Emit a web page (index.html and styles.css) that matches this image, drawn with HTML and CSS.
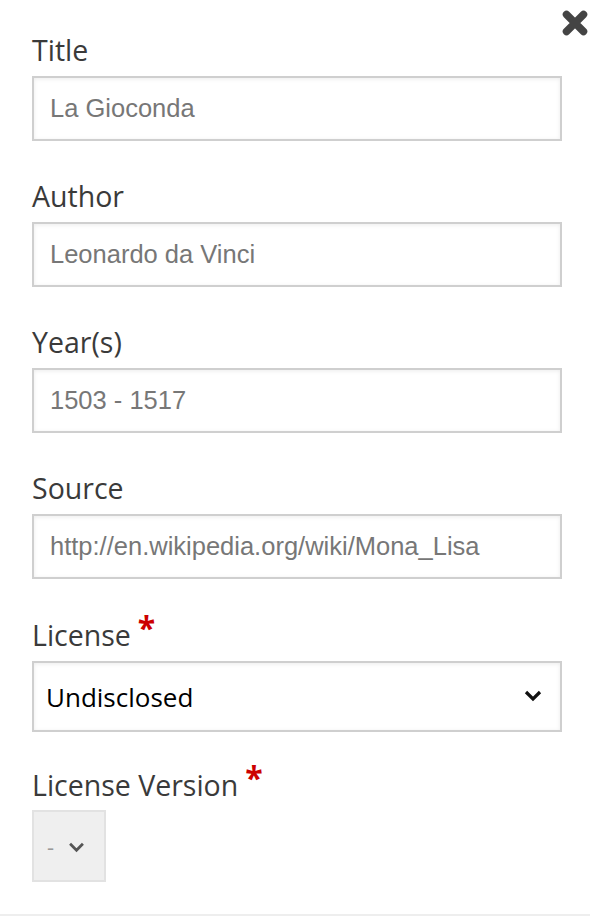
FILE: index.html
```html
<!DOCTYPE html>
<html lang="en">
<head>
<meta charset="utf-8">
<title>Artwork details</title>
<link rel="stylesheet" href="styles.css">
</head>
<body>
<div class="panel">
  <button class="close" type="button" aria-label="Close">
    <svg viewBox="0 0 26 26" width="26" height="26"><path d="M4.5 4.5 L21.5 21.5 M21.5 4.5 L4.5 21.5" stroke="#444" stroke-width="7.5" stroke-linecap="round"/></svg>
  </button>
  <form class="form">
    <div class="field">
      <label class="label" for="title">Title</label>
      <input class="input" id="title" type="text" placeholder="La Gioconda">
    </div>
    <div class="field">
      <label class="label" for="author">Author</label>
      <input class="input" id="author" type="text" placeholder="Leonardo da Vinci">
    </div>
    <div class="field">
      <label class="label" for="years">Year(s)</label>
      <input class="input" id="years" type="text" placeholder="1503 - 1517">
    </div>
    <div class="field">
      <label class="label" for="source">Source</label>
      <input class="input" id="source" type="text" placeholder="http://en.wikipedia.org/wiki/Mona_Lisa">
    </div>
    <div class="field">
      <label class="label" for="license">License<span class="req">*</span></label>
      <div class="select-wrap">
        <select class="select" id="license"><option>Undisclosed</option></select>
        <svg class="chev" viewBox="0 0 18 12" width="18" height="12"><path d="M2 2 L9 9 L16 2" fill="none" stroke="#111" stroke-width="3.2"/></svg>
      </div>
    </div>
    <div class="field last">
      <label class="label" for="version">License Version<span class="req">*</span></label>
      <div class="mini-wrap">
        <select class="mini" id="version" disabled><option>-</option></select>
        <svg class="mini-chev" viewBox="0 0 18 12" width="17" height="11"><path d="M2 2 L9 9 L16 2" fill="none" stroke="#555" stroke-width="3"/></svg>
      </div>
    </div>
  </form>
</div>
<div class="footer-line"></div>
</body>
</html>
```
FILE: styles.css
```css
html, body {
  margin: 0;
  padding: 0;
  background: #fff;
}
body {
  width: 590px;
  height: 916px;
  overflow: hidden;
  display: flex;
  flex-direction: column;
}
.panel {
  position: relative;
  flex: 1;
  padding: 32px 28px 0 32px;
}
.close {
  position: absolute;
  top: 9px;
  right: 1px;
  width: 28px;
  height: 28px;
  padding: 0;
  border: 0;
  background: none;
  display: flex;
  align-items: center;
  justify-content: center;
}
.form {
  display: flex;
  flex-direction: column;
  gap: 37px;
}
.field {
  display: flex;
  flex-direction: column;
  align-items: flex-start;
}
.field.last {
  margin-top: -3px;
}
.field.last .label {
  margin-bottom: 7px;
}
.label {
  font-family: "Open Sans", sans-serif;
  font-size: 28.5px;
  line-height: 36px;
  color: #3a3a3a;
  margin-bottom: 8px;
}
.req {
  color: #cc0000;
  font-size: 32px;
  font-weight: 700;
  position: relative;
  top: -6px;
  margin-left: 7px;
}
.input {
  box-sizing: border-box;
  width: 530px;
  height: 65px;
  border: 2px solid #cfcfcf;
  box-shadow: inset 0 1px 4px rgba(0,0,0,0.08);
  padding: 0 16px;
  font-family: "Liberation Sans", Arial, sans-serif;
  font-size: 25.5px;
  color: #777;
  outline: none;
}
.input::placeholder {
  color: #777;
  opacity: 1;
}
.select-wrap {
  position: relative;
  width: 530px;
}
.select {
  box-sizing: border-box;
  width: 530px;
  height: 71px;
  border: 2px solid #cfcfcf;
  border-radius: 0;
  box-shadow: inset 0 1px 4px rgba(0,0,0,0.08);
  background: #fff;
  padding: 0 12px;
  font-family: "Open Sans", sans-serif;
  font-size: 26px;
  color: #000;
  appearance: none;
  -webkit-appearance: none;
  outline: none;
}
.chev {
  position: absolute;
  right: 20px;
  top: 29px;
  pointer-events: none;
}
.mini-wrap {
  position: relative;
  width: 74px;
}
.mini {
  box-sizing: border-box;
  width: 74px;
  height: 72px;
  border: 2px solid #e2e2e2;
  border-radius: 0;
  background: #efefef;
  padding: 0 0 0 13px;
  font-family: "Open Sans", sans-serif;
  font-size: 22px;
  color: #999;
  appearance: none;
  -webkit-appearance: none;
  opacity: 1;
}
.mini-chev {
  position: absolute;
  left: 36px;
  top: 32px;
  pointer-events: none;
}
.footer-line {
  height: 2px;
  background: #eee;
}
```
